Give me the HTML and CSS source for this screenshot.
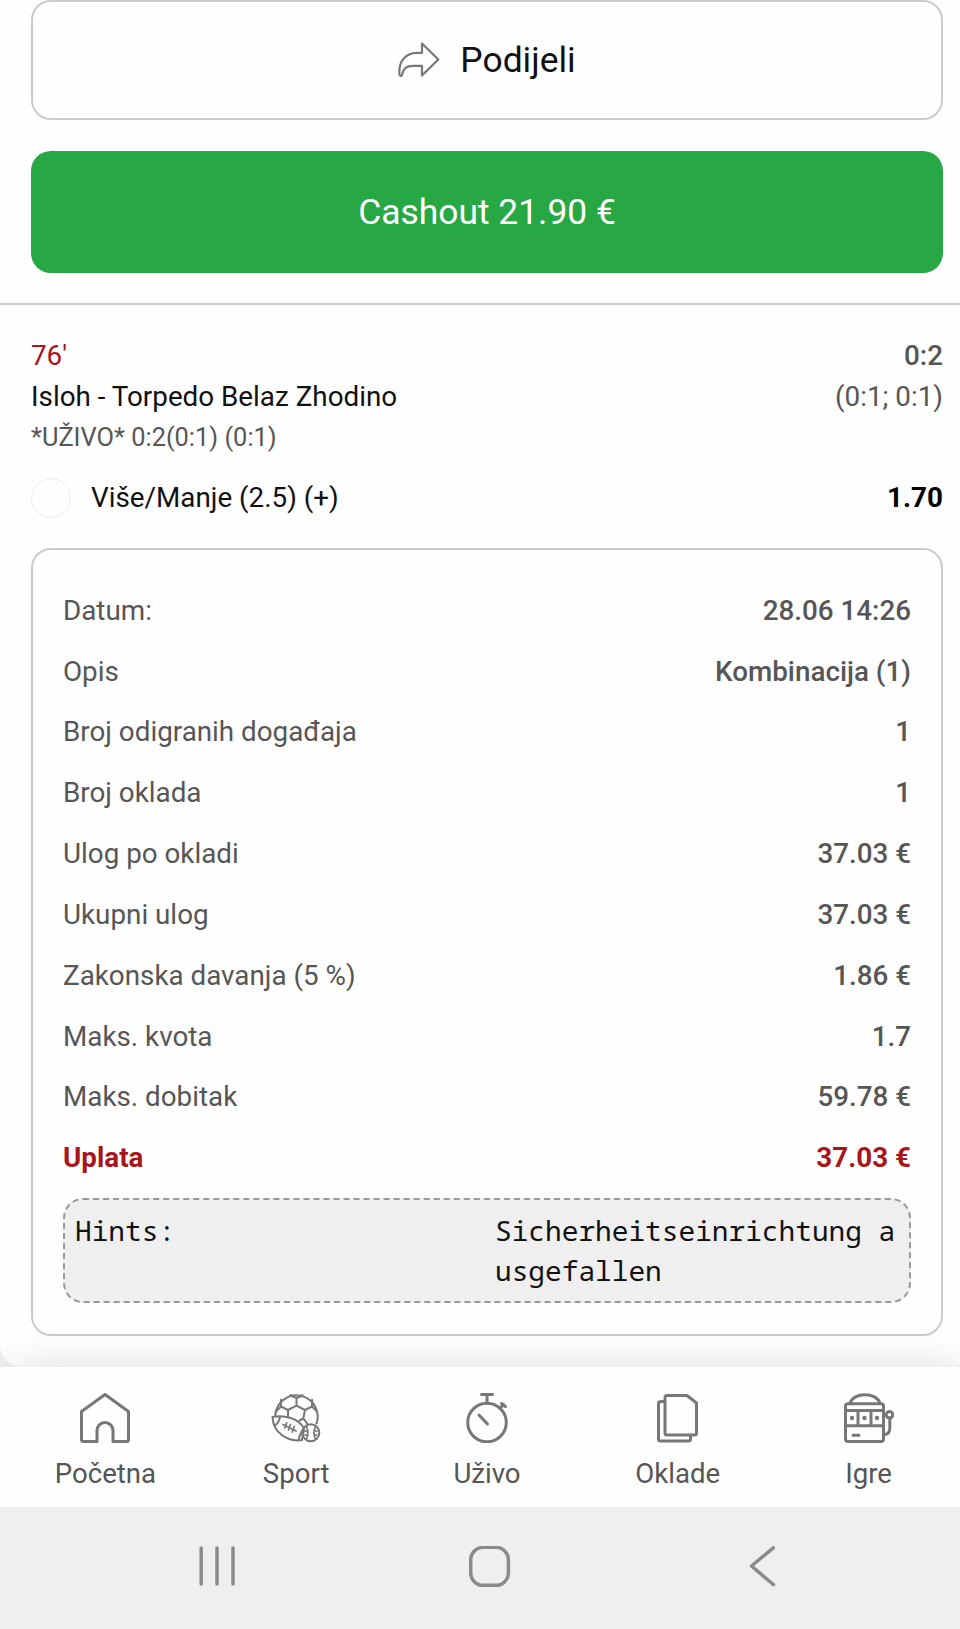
FILE: index.html
```html
<!DOCTYPE html>
<html lang="hr">
<head>
<meta charset="utf-8">
<title>Listić</title>
<link rel="stylesheet" href="styles.css">
</head>
<body>
<div class="screen">
  <main class="ticket">
    <div class="actions">
      <button class="btn btn-share">
        <svg class="share-icon" viewBox="0 0 42 36"><path d="M24 1.5 40.3 17.5 24 33.5V23.8H15C8.500 23.800 5.500 26 4 33.300Q1.800 34.800 1.500 32C.5 20 7 10.800 19 10.800H24Z"/></svg>
        <span>Podijeli</span>
      </button>
      <button class="btn btn-cashout">Cashout 21.90 €</button>
    </div>
    <section class="event">
      <div class="line"><span class="minute">76'</span><span class="score">0:2</span></div>
      <div class="line"><span class="teams">Isloh - Torpedo Belaz Zhodino</span><span>(0:1; 0:1)</span></div>
      <div class="line live">*UŽIVO* 0:2(0:1) (0:1)</div>
      <div class="pick"><span class="status"></span><span class="pick-name">Više/Manje (2.5) (+)</span><span class="odd">1.70</span></div>
    </section>
    <section class="card">
      <dl class="details">
        <div class="row"><dt>Datum:</dt><dd>28.06 14:26</dd></div>
        <div class="row"><dt>Opis</dt><dd>Kombinacija (1)</dd></div>
        <div class="row"><dt>Broj odigranih događaja</dt><dd>1</dd></div>
        <div class="row"><dt>Broj oklada</dt><dd>1</dd></div>
        <div class="row"><dt>Ulog po okladi</dt><dd>37.03 €</dd></div>
        <div class="row"><dt>Ukupni ulog</dt><dd>37.03 €</dd></div>
        <div class="row"><dt>Zakonska davanja (5 %)</dt><dd>1.86 €</dd></div>
        <div class="row"><dt>Maks. kvota</dt><dd>1.7</dd></div>
        <div class="row"><dt>Maks. dobitak</dt><dd>59.78 €</dd></div>
        <div class="row total"><dt>Uplata</dt><dd>37.03 €</dd></div>
      </dl>
      <div class="hints"><span>Hints:</span><span class="hint-text">Sicherheitseinrichtung ausgefallen</span></div>
    </section>
  </main>
  <nav class="tabs">
    <a class="tab">
      <svg class="tab-icon" viewBox="0 0 50 50"><path d="M25 1.500 48.500 18.500V46.500Q48.500 48.500 46.500 48.500H33V37.500A8 8 0 0 0 17 37.500V48.500H3.500Q1.500 48.500 1.500 46.500V18.500Z"/></svg>
      <span>Početna</span>
    </a>
    <a class="tab">
      <svg class="tab-icon fine" viewBox="0 0 50 50">
        <path d="M4.300 22.500A21.200 21.200 0 1 1 45.500 30.500"/>
        <path d="M19.500 2Q25.500 7.500 31.500 2M25.500 5V12.700L17 17 10 13.500V6.800M25.500 12.700 34 17 41 13.500V6.800M17 17V23.500M34 17 32.300 25.500M41 13.500 45.500 18M10 13.500 5.500 18M32.300 25.500 36.500 31M32.300 25.500 28.500 27.500"/>
        <path d="M1.500 24C13 21.500 28 25.500 33 35.500L31 47C16 49.500 2 39 1.500 24ZM9 23.500Q8.500 29 4 32.500M33 35.500Q29 40 27.500 47.300"/>
        <path class="stitch" d="M12 31.500 25 38M15.800 29.800 13.800 35M19.500 31.500 17.500 37M23.300 33.300 21.300 39"/>
        <circle cx="39.800" cy="39.800" r="8.500"/>
        <path class="stitch" d="M35.500 33.500Q38 39.800 35.500 46M44.500 33.500Q41.500 39.800 44.500 46M33.500 38h3.500M33.500 42h3.500M43 38h3M43 42h3"/>
      </svg>
      <span>Sport</span>
    </a>
    <a class="tab">
      <svg class="tab-icon" viewBox="0 0 50 50"><circle cx="25" cy="29.500" r="19.300"/><path d="M19.500 1.600H30.500M25 2V10M38 15.500 41.500 11.500M39.500 10.500 43.500 13.500M17 22 25.500 31"/></svg>
      <span>Uživo</span>
    </a>
    <a class="tab">
      <svg class="tab-icon" viewBox="0 0 50 50"><path d="M14 2.500H34L43.500 10V40Q43.500 42 41.500 42H14Q12 42 12 40V4.500Q12 2.500 14 2.500ZM12 8.500H8Q5.500 8.500 5.500 10.500V46Q5.500 48 7.500 48H35.500Q37.500 48 37.500 46V42.500"/></svg>
      <span>Oklade</span>
    </a>
    <a class="tab">
      <svg class="tab-icon" viewBox="0 0 50 50"><rect x="1.500" y="10.800" width="38" height="37.700" rx="2.500"/><path d="M6 10.500C9-1.300 33-1.300 36 10.500M1.500 17.500H39.500M1.500 32.700H39.500M14 17.500V32.700M27 17.500V32.700M9 42.200H15M40 41.500H41Q45.800 41 45.800 35V25"/><circle cx="45.500" cy="21.800" r="3.300"/><circle class="dot" cx="8" cy="25" r="2.200"/><circle class="dot" cx="20.500" cy="25" r="2.200"/><circle class="dot" cx="33" cy="25" r="2.200"/></svg>
      <span>Igre</span>
    </a>
  </nav>
  <footer class="system">
    <svg class="sys-icon" viewBox="0 0 42 42"><path d="M5.200 2V38M21 2V38M37 2V38"/></svg>
    <svg class="sys-icon" viewBox="0 0 42 42"><rect x="1.700" y="1.300" width="37.700" height="38" rx="12.500"/></svg>
    <svg class="sys-icon" viewBox="0 0 42 42"><path d="M31.300 1.800 9.500 20 31.500 38.700"/></svg>
  </footer>
</div>
</body>
</html>
```

FILE: styles.css
```css
* { box-sizing: border-box; }

body {
  margin: 0;
  overflow: hidden;
  background: #efefef;
  color: #565656;
  font: 27.8px/40.5px Roboto, sans-serif;
}

/* The layout is slightly wider than the viewport. */
.screen { width: 974px; height: 1629px; display: flex; flex-direction: column; }

.ticket {
  flex: none;
  height: 1367px;
  background: #fefefe;
  border-radius: 0 0 22px 22px;
}

.actions {
  display: flex;
  flex-direction: column;
  gap: 31px;
  padding: 0 31px 30px;
  border-bottom: 2px solid #cbcbcb;
}

.btn {
  display: flex;
  align-items: center;
  justify-content: center;
  padding-bottom: 2px;
  border-radius: 20px;
  font: 35.4px/40px Roboto, sans-serif;
}

.btn-share { height: 120px; gap: 20px; border: 2px solid #cbcbcb; background: #fefefe; color: #111; }
.btn-cashout { height: 122px; border: 0; background: #28a745; color: #fff; }
.share-icon { width: 42px; height: 36px; fill: none; stroke: #777; stroke-width: 2.2; stroke-linejoin: round; }

.event { padding: 31px 31px 0; }
.line { display: flex; justify-content: space-between; }
.minute { color: #a8151b; }
.score { font-weight: 500; }
.teams { color: #111; }
.live { font-size: 25.4px; }
.pick { display: flex; align-items: center; height: 41px; margin-top: 20px; color: #111; }
.status { width: 40px; height: 40px; margin-right: 20px; border: 1.5px solid #eee; border-radius: 50%; }
.odd { margin-left: auto; color: #000; font-weight: 700; }

.card {
  height: 788px;
  margin: 29px 31px 0;
  padding: 31px 30px 30px;
  border: 2px solid #cbcbcb;
  border-radius: 20px;
}

.details { margin: 0; }
.row { display: flex; align-items: center; justify-content: space-between; height: 60.85px; }
.row dd { margin: 0; font-weight: 500; }
.total { color: #a8151b; font-weight: 700; }
.total dd { font-weight: 700; }

.hints {
  display: grid;
  grid-template-columns: 1fr 404px;
  height: 105px;
  margin-top: 9px;
  padding: 10px;
  border: 2px dashed #999;
  border-radius: 20px;
  background: #efefef;
  color: #111;
  font-family: "Droid Sans Mono", "Noto Sans Mono", "DejaVu Sans Mono", monospace;
}

.hint-text { word-break: break-all; }

.tabs {
  position: relative;
  flex: none;
  display: grid;
  grid-template-columns: repeat(5, 1fr);
  height: 140px;
  padding: 26px 10px 0;
  background: #fefefe;
  font-size: 27.6px;
  box-shadow: 0 -6px 45px -14px rgba(0, 0, 0, 0.2);
}

.tab { display: flex; flex-direction: column; align-items: center; gap: 11px; }
.tab-icon { width: 50px; height: 50px; fill: none; stroke: #777; stroke-width: 3; stroke-linecap: round; stroke-linejoin: round; }
.fine { stroke-width: 2; }
.stitch { stroke-width: 1.7; }
.dot { fill: #777; stroke: none; }

.system {
  position: relative;
  flex: 1;
  display: flex;
  align-items: flex-start;
  gap: 231px;
  padding: 39px 0 0 196px;
  background: #efefef;
}

.sys-icon { width: 42px; height: 42px; fill: none; stroke: #8b8b8b; stroke-width: 3.5; stroke-linecap: round; stroke-linejoin: round; }
```
